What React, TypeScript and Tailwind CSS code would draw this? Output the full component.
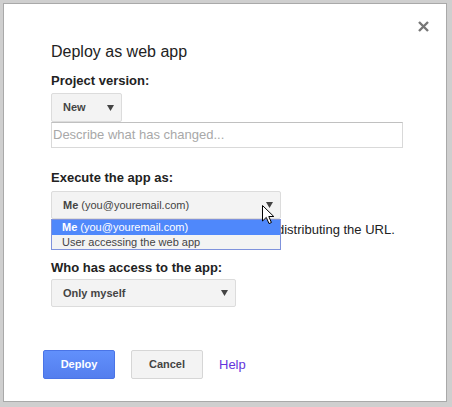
import React from 'react';

const font = { fontFamily: '"Liberation Sans", Arial, sans-serif' };

function Arrow() {
    return (
        <svg width="7" height="6" viewBox="0 0 7 6" className="shrink-0">
            <path d="M0 0 L7 0 L3.5 6 Z" fill="#444" />
        </svg>
    );
}

function Cursor() {
    return (
        <svg width="13" height="20" viewBox="0 0 13 20" className="absolute left-[211px] top-[14px] z-20">
            <path
                d="M0.5 0.5 L0.5 16 L4.3 12.4 L7 18.6 L9.4 17.5 L6.8 11.5 L11.8 11.5 Z"
                fill="#fff"
                stroke="#000"
                strokeWidth="1"
                strokeLinejoin="round"
            />
        </svg>
    );
}

export default function App() {
    return (
        <div className="w-[452px] h-[407px] bg-[#cfcfcf] pt-[3px] pl-[3px]" style={font}>
            <div className="relative w-[444px] h-[399px] bg-white border border-[#a9a9a9] pt-[38px] pl-[47px] text-[13px] text-[#222]">
                {/* Close */}
                <svg width="11" height="11" viewBox="0 0 11 11" className="absolute left-[414px] top-[17px]">
                    <path d="M1 1 L10 10 M10 1 L1 10" stroke="#777" strokeWidth="2.4" />
                </svg>

                <h1 className="text-[16px] leading-[20px] font-normal text-[#222]">Deploy as web app</h1>

                <div className="mt-[11px] font-bold leading-[16px]">Project version:</div>
                <div className="mt-[4px] w-[71px] h-[29px] flex items-center justify-between pl-[11px] pr-[7px] bg-[#f3f3f3] border border-[#dcdcdc] rounded-[2px] text-[11px] font-bold text-[#444]">
                    <span>New</span>
                    <Arrow />
                </div>
                <div className="w-[352px] h-[26px] border border-[#d9d9d9] border-t-[#c0c0c0] flex items-center pl-[1px] text-[13px] text-[#a8a8a8]">
                    Describe what has changed...
                </div>

                <div className="mt-[22px] font-bold leading-[16px]">Execute the app as:</div>
                <div className="relative mt-[5px] w-[230px]">
                    <div className="h-[28px] flex items-center justify-between pl-[11px] pr-[7px] bg-[#f3f3f3] border border-[#dcdcdc] rounded-[2px] text-[11px] text-[#444]">
                        <span>
                            <span className="font-bold">Me</span> (you@youremail.com)
                        </span>
                        <Arrow />
                    </div>
                    {/* Open menu */}
                    <div className="absolute left-0 top-full w-[230px] z-10 border border-[#7f92dc] bg-[#f3f3f3] text-[11px]">
                        <div className="h-[15px] flex items-center pl-[10px] bg-[#4f88fb] text-white">
                            <span className="font-bold">Me</span>&nbsp;(you@youremail.com)
                        </div>
                        <div className="h-[14px] flex items-center pl-[10px] text-[#444]">User accessing the web app</div>
                    </div>
                    <Cursor />
                </div>
                <div className="mt-[3px] leading-[16px] pl-[226px] text-[#222]">distributing the URL.</div>

                <div className="mt-[22px] font-bold leading-[16px]">Who has access to the app:</div>
                <div className="mt-[3px] w-[185px] h-[28px] flex items-center justify-between pl-[11px] pr-[7px] bg-[#f3f3f3] border border-[#dcdcdc] rounded-[2px] text-[11px] font-bold text-[#444]">
                    <span>Only myself</span>
                    <Arrow />
                </div>

                <div className="mt-[43px] -ml-[8px] flex items-center gap-[16px]">
                    <button className="w-[72px] h-[29px] rounded-[2px] border border-[#4a74e6] bg-linear-to-b from-[#6190fb] to-[#547eee] text-white text-[11px] font-bold">
                        Deploy
                    </button>
                    <button className="w-[72px] h-[29px] rounded-[2px] border border-[#d6d6d6] bg-[#f3f3f3] text-[#444] text-[11px] font-bold">
                        Cancel
                    </button>
                    <a className="text-[13px] text-[#6435dc]">Help</a>
                </div>
            </div>
        </div>
    );
}
